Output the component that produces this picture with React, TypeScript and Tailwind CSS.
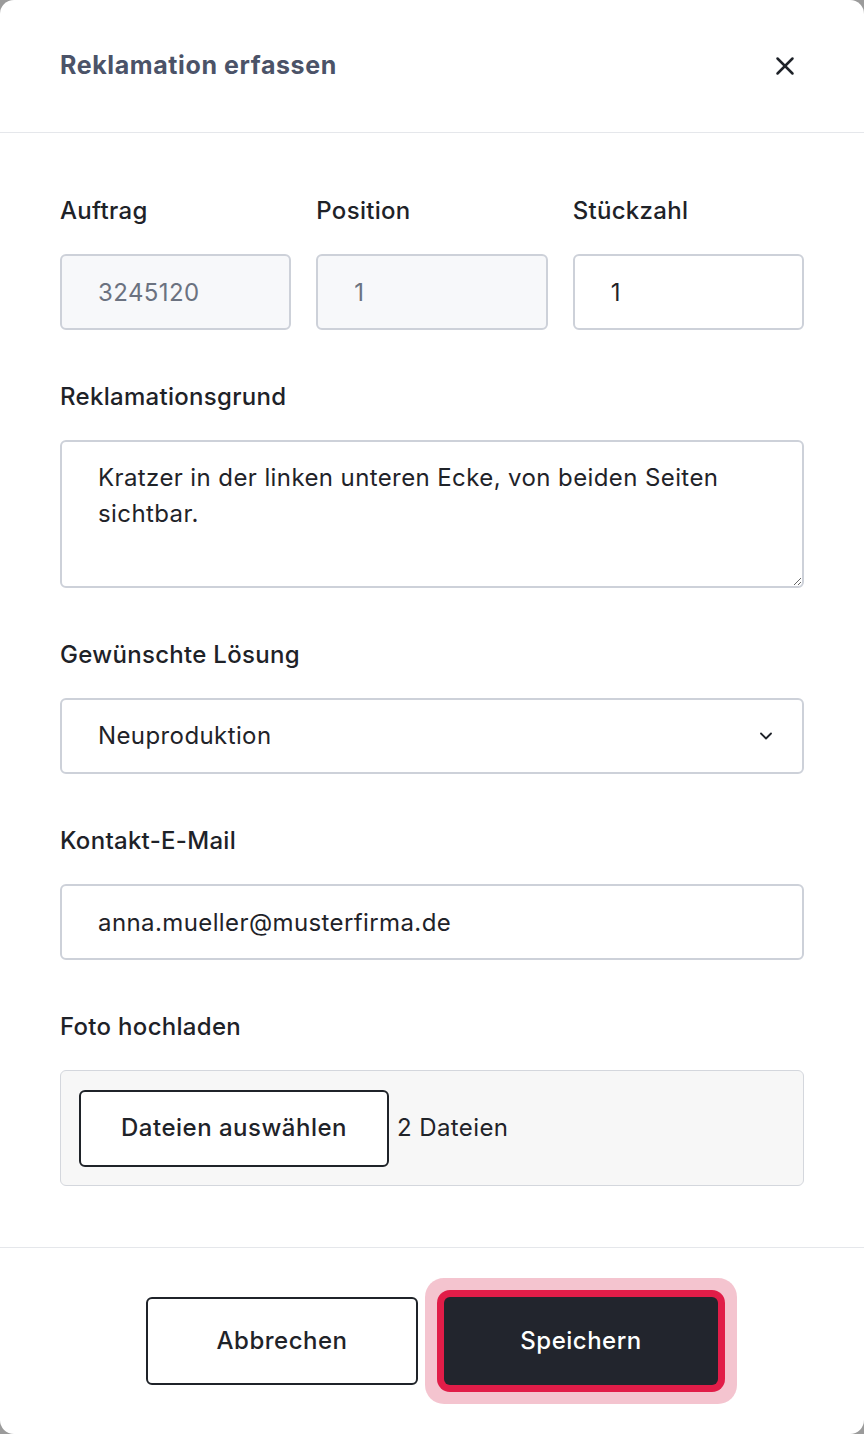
import { X, ChevronDown } from 'lucide-react';

const font = { fontFamily: 'Inter, "Noto Sans", sans-serif' };

function Label({ children }: { children: React.ReactNode }) {
  return (
    <label className="block mb-[25px] text-[24px] leading-[36px] font-medium tracking-[0.3px] text-[#1e2228]">
      {children}
    </label>
  );
}

const inputBase =
  'w-full h-[76px] rounded-[6px] border-2 border-[#cdd1d9] px-[36px] text-[24px] tracking-[0.4px] outline-none';

export default function App() {
  return (
    <div className="h-[1434px] w-[864px] bg-[#9b9b9b]" style={font}>
      <div className="h-full w-full rounded-[14px] bg-white flex flex-col overflow-hidden">
        {/* Header */}
        <div className="h-[133px] shrink-0 flex items-center justify-between pl-[60px] pr-[64px] border-b border-[#e5e7eb]">
          <h2 className="text-[25px] font-bold text-[#4b5368] tracking-[0.6px]">Reklamation erfassen</h2>
          <X className="w-[30px] h-[30px] text-[#1f2329]" strokeWidth={2} />
        </div>

        {/* Body */}
        <div className="flex-1 px-[60px] pt-[60px] flex flex-col gap-[49px]">
          <div className="grid grid-cols-3 gap-[25px]">
            <div>
              <Label>Auftrag</Label>
              <input readOnly disabled defaultValue="3245120" className={`${inputBase} bg-[#f7f8fa] text-[#6b7280]`} />
            </div>
            <div>
              <Label>Position</Label>
              <input readOnly disabled defaultValue="1" className={`${inputBase} bg-[#f7f8fa] text-[#6b7280]`} />
            </div>
            <div>
              <Label>Stückzahl</Label>
              <input readOnly defaultValue="1" className={`${inputBase} bg-white text-[#1f2329]`} />
            </div>
          </div>

          <div>
            <Label>Reklamationsgrund</Label>
            <textarea
              readOnly
              defaultValue="Kratzer in der linken unteren Ecke, von beiden Seiten sichtbar."
              className="block w-full h-[148px] rounded-[6px] border-2 border-[#cdd1d9] px-[36px] pt-[18px] text-[24px] tracking-[0.4px] leading-[36px] text-[#1f2329] outline-none"
            />
          </div>

          <div>
            <Label>Gewünschte Lösung</Label>
            <div className="relative">
              <div className={`${inputBase} bg-white text-[#1f2329] flex items-center`}>Neuproduktion</div>
              <ChevronDown className="absolute right-[28px] top-1/2 -translate-y-1/2 w-[20px] h-[20px] text-[#1f2329]" strokeWidth={2.2} />
            </div>
          </div>

          <div>
            <Label>Kontakt-E-Mail</Label>
            <input readOnly defaultValue="anna.mueller@musterfirma.de" className={`${inputBase} bg-white text-[#1f2329]`} />
          </div>

          <div>
            <Label>Foto hochladen</Label>
            <div className="h-[116px] rounded-[6px] border-[1.5px] border-[#d4d7dd] bg-[#f7f7f7] flex items-center px-[18px] gap-[8px]">
              <div className="w-[310px] h-[77px] rounded-[6px] border-2 border-[#1f2329] bg-white flex items-center justify-center text-[24px] font-medium tracking-[0.5px] text-[#1f2329]">
                Dateien auswählen
              </div>
              <span className="text-[24px] tracking-[0.4px] text-[#1f2329]">2 Dateien</span>
            </div>
          </div>
        </div>

        {/* Footer */}
        <div className="h-[187px] shrink-0 border-t border-[#e5e7eb] flex items-center justify-center gap-[26px]">
          <button className="w-[272px] h-[88px] rounded-[6px] border-2 border-[#1f2329] bg-white text-[24px] font-medium tracking-[0.5px] text-[#1f2329]">
            Abbrechen
          </button>
          <button className="w-[274px] h-[88px] rounded-[6px] bg-[#22252d] text-[24px] font-medium tracking-[0.5px] text-white shadow-[0_0_0_7px_#e11d48,0_0_0_19px_rgba(220,60,95,0.3)]">
            Speichern
          </button>
        </div>
      </div>
    </div>
  );
}
